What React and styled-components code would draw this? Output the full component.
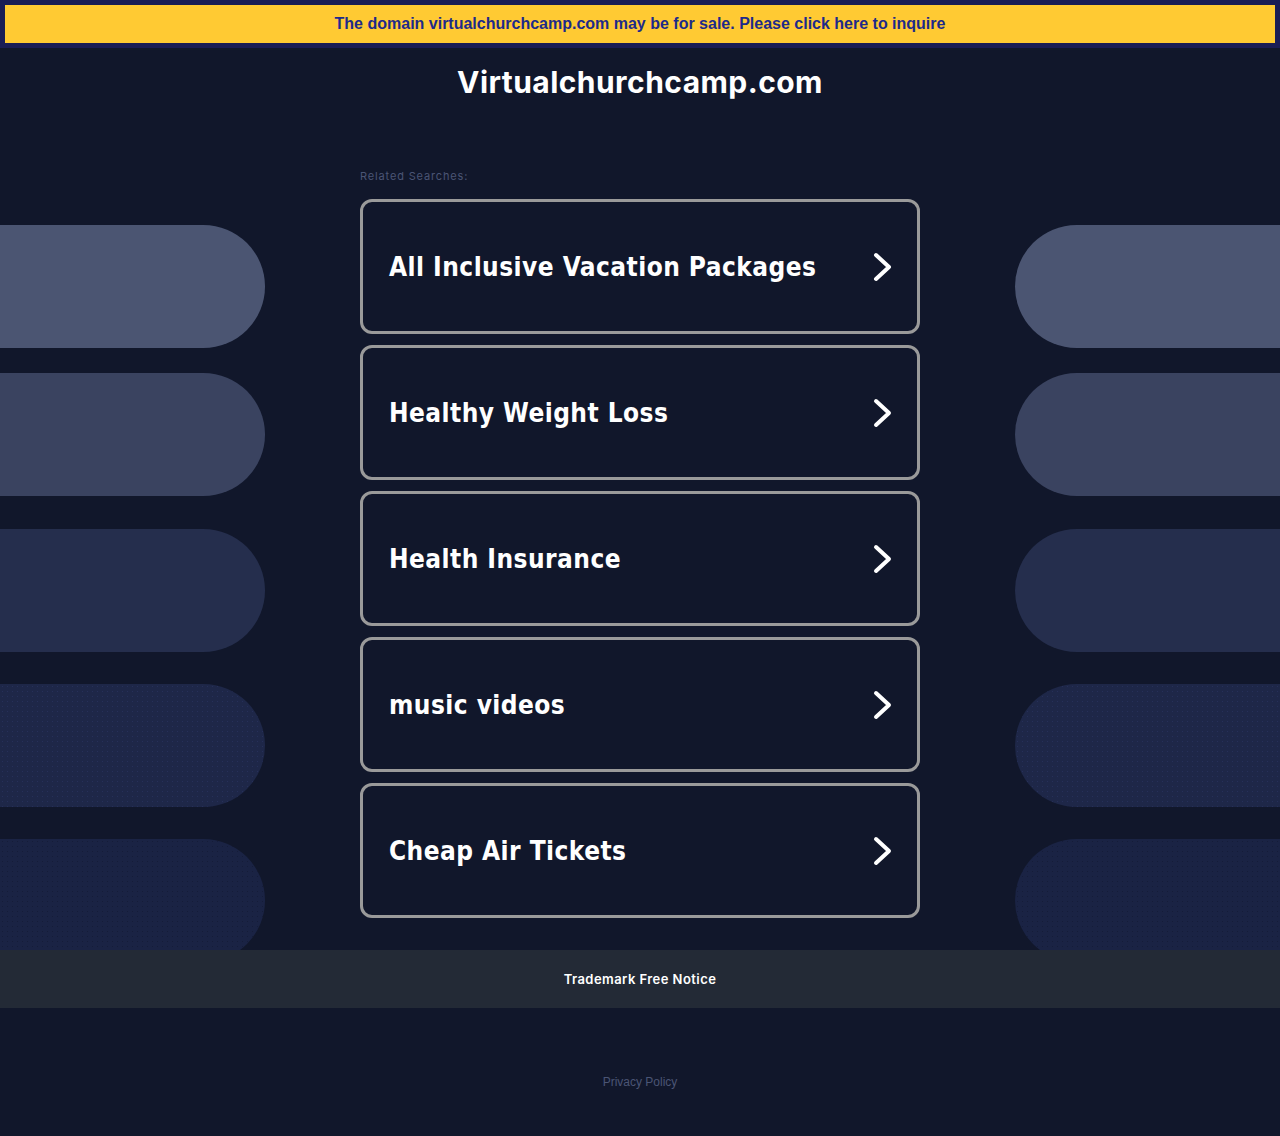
import React from "react";
import styled, { createGlobalStyle } from "styled-components";

const Global = createGlobalStyle`
  html, body { margin: 0; padding: 0; background: #11172b; }
  body { font-family: "Liberation Sans", Arial, sans-serif; }
  * { box-sizing: border-box; }
`;

const Page = styled.div`
  width: 1280px;
  min-height: 1136px;
  background: #11172b;
  display: flex;
  flex-direction: column;
`;

const BannerBar = styled.div`
  background: #1a1d55;
  padding: 5px;
  height: 48px;
`;

const BannerLink = styled.a`
  display: flex;
  align-items: center;
  justify-content: center;
  height: 38px;
  background: #ffca33;
  color: #1d2a8a;
  font-family: "Liberation Sans", Arial, sans-serif;
  font-weight: 700;
  font-size: 16px;
  text-decoration: none;
`;

const Header = styled.header`
  height: 102px;
  display: flex;
  justify-content: center;
  padding-top: 16px;
`;

const Title = styled.h1`
  margin: 0;
  color: #ffffff;
  font-family: Inter, "Open Sans", sans-serif;
  font-weight: 700;
  font-size: 30px;
  line-height: 36px;
  letter-spacing: 0.45px;
`;

const Main = styled.main`
  display: grid;
  grid-template-columns: 265px 1fr 265px;
  height: 800px;
  overflow: hidden;
`;

const PillColumn = styled.div`
  display: flex;
  flex-direction: column;
  padding-top: 75px;
`;

const Pill = styled.div`
  flex: none;
  height: 123px;
  margin-top: ${(p) => p.$top}px;
  background-color: ${(p) => p.$bg};
  background-image: ${(p) =>
    p.$dots
      ? `radial-gradient(${p.$dots} 0.7px, transparent 1px)`
      : "none"};
  background-size: 5px 5px;
  border-radius: ${(p) => (p.$side === "left" ? "0 62px 62px 0" : "62px 0 0 62px")};
`;

const Center = styled.section`
  display: flex;
  flex-direction: column;
  align-items: center;
  padding-top: 19px;
`;

const List = styled.div`
  width: 560px;
  display: flex;
  flex-direction: column;
  gap: 11px;
`;

const Label = styled.div`
  color: #4b5575;
  font-family: Inter, "Open Sans", sans-serif;
  font-size: 11px;
  line-height: 15px;
  letter-spacing: 0.85px;
  margin-bottom: 4px;
`;

const Card = styled.a`
  display: flex;
  align-items: center;
  justify-content: space-between;
  height: 135px;
  padding: 0 23px 0 26px;
  border: 3px solid #9a9a9a;
  border-radius: 12px;
  background: #11172b;
  color: #ffffff;
  text-decoration: none;
`;

const CardText = styled.span`
  font-family: "DejaVu Sans Condensed", "DejaVu Sans", Verdana, sans-serif;
  font-stretch: condensed;
  font-weight: 700;
  font-size: 26px;
  line-height: 32px;
  letter-spacing: 0.45px;
`;

const Chevron = styled.svg`
  flex: none;
  width: 22px;
  height: 30px;
`;

const Footer = styled.footer`
  height: 58px;
  background: #232a36;
  display: flex;
  align-items: center;
  justify-content: center;
`;

const FooterLink = styled.a`
  color: #ffffff;
  font-family: Inter, "Open Sans", sans-serif;
  font-weight: 600;
  font-size: 13px;
  letter-spacing: 0.45px;
  text-decoration: none;
`;

const Bottom = styled.div`
  display: flex;
  justify-content: center;
  padding-top: 67px;
`;

const Privacy = styled.a`
  color: #4b5575;
  font-family: "Liberation Sans", Arial, sans-serif;
  font-size: 12px;
  text-decoration: none;
`;

const pills = [
  { top: 0, bg: "#4b5572" },
  { top: 25, bg: "#3a4360" },
  { top: 33, bg: "#252e4d" },
  { top: 32, bg: "#1e2748", dots: "#26305a" },
  { top: 32, bg: "#1a2344", dots: "#151c38" },
];

const searches = [
  "All Inclusive Vacation Packages",
  "Healthy Weight Loss",
  "Health Insurance",
  "music videos",
  "Cheap Air Tickets",
];

function Pills({ side }) {
  return (
    <PillColumn>
      {pills.map((p, i) => (
        <Pill key={i} $side={side} $top={p.top} $bg={p.bg} $dots={p.dots} />
      ))}
    </PillColumn>
  );
}

export default function App() {
  return (
    <>
      <Global />
      <Page>
        <BannerBar>
          <BannerLink href="#">
            The domain virtualchurchcamp.com may be for sale. Please click here to inquire
          </BannerLink>
        </BannerBar>
        <Header>
          <Title>Virtualchurchcamp.com</Title>
        </Header>
        <Main>
          <Pills side="left" />
          <Center>
            <List>
              <Label>Related Searches:</Label>
              {searches.map((s) => (
                <Card key={s} href="#">
                  <CardText>{s}</CardText>
                  <Chevron viewBox="0 0 22 30">
                    <path
                      d="M4 3 L17 15 L4 27"
                      fill="none"
                      stroke="#ffffff"
                      strokeWidth="4"
                      strokeLinecap="round"
                      strokeLinejoin="round"
                    />
                  </Chevron>
                </Card>
              ))}
            </List>
          </Center>
          <Pills side="right" />
        </Main>
        <Footer>
          <FooterLink href="#">Trademark Free Notice</FooterLink>
        </Footer>
        <Bottom>
          <Privacy href="#">Privacy Policy</Privacy>
        </Bottom>
      </Page>
    </>
  );
}
